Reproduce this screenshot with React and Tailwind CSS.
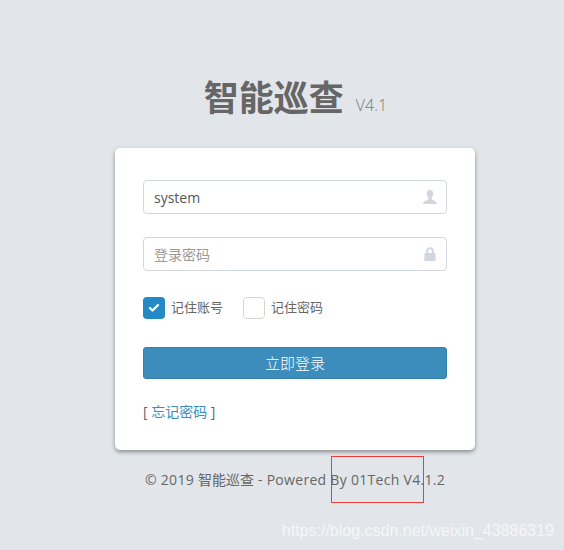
import { Check } from "lucide-react";

const FONT = "font-['Open_Sans','Noto_Sans_CJK_SC',sans-serif]";

function UserGlyph() {
	return (
		<svg viewBox="0 0 16 16" className="w-[16px] h-[16px] text-[#d2d6de]" fill="currentColor">
			<path d="M8 1C5.9 1 4.7 2.5 4.7 4.6c0 1.7.7 3.1 1.6 4v1.2c0 .6-.5 1-1.4 1.4C3.2 11.9 1.2 12.4 1 15h14c-.2-2.6-2.2-3.1-3.9-3.8-.9-.4-1.4-.8-1.4-1.4V8.6c.9-.9 1.6-2.3 1.6-4C11.3 2.5 10.1 1 8 1z" />
		</svg>
	);
}

function LockGlyph() {
	return (
		<svg viewBox="0 0 16 16" className="w-[16px] h-[16px] text-[#d2d6de]" fill="currentColor">
			<path d="M8 1.2c-2.3 0-3.9 1.6-3.9 3.9v2H2.4V15h11.2V7.1h-1.7v-2c0-2.3-1.6-3.9-3.9-3.9zm0 2c1.2 0 1.9.8 1.9 1.9v2H6.1v-2c0-1.1.7-1.9 1.9-1.9z" />
		</svg>
	);
}

export default function App() {
	return (
		<div className={`relative w-[564px] h-[550px] overflow-hidden bg-[#e2e5ea] text-[#666] ${FONT}`}>
			<div className="flex flex-col items-center pt-[73px] pl-[26px]">
				<div className="flex items-baseline justify-center h-[50px] gap-[12px] pl-[1px]">
					<span className="text-[35px] leading-[50px] font-bold text-[#666]">智能巡查</span>
					<span className="text-[16px] font-light text-[#777]">V4.1</span>
				</div>

				<div className="w-[360px] h-[302px] mt-[25px] px-[28px] pt-[32px] bg-white rounded-[5px] shadow-[0_2px_4px_0_rgba(0,0,0,0.4)]">
					<div className="flex items-center justify-between h-[34px] pl-[10px] pr-[8px] border border-[#d2d6de] rounded-[4px]">
						<span className="text-[14px] text-[#555]">system</span>
						<UserGlyph />
					</div>
					<div className="flex items-center justify-between h-[34px] mt-[23px] pl-[10px] pr-[8px] border border-[#d2d6de] rounded-[4px]">
						<span className="text-[14px] text-[#999]">登录密码</span>
						<LockGlyph />
					</div>

					<div className="flex items-center h-[22px] mt-[26px]">
						<div className="flex items-center justify-center w-[22px] h-[22px] bg-[#2489c5] rounded-[4px]">
							<Check className="w-[12px] h-[12px] text-white" strokeWidth={4.5} />
						</div>
						<span className="ml-[6px] text-[13px] text-[#666]">记住账号</span>
						<div className="w-[22px] h-[22px] ml-[20px] bg-white border border-[#d8d5d0] rounded-[4px]" />
						<span className="ml-[6px] text-[13px] text-[#666]">记住密码</span>
					</div>

					<button
						type="button"
						className="block w-full h-[32px] mt-[28px] bg-[#3c8dbc] border border-[#367fa9] rounded-[3px] text-[15px] font-light text-white"
					>
						立即登录
					</button>

					<div className="mt-[23px] text-[14px] leading-[20px] text-[#666]">
						[ <span className="text-[#3c8dbc]">忘记密码</span> ]
					</div>
				</div>

				<div className="mt-[20px] text-[14px] leading-[20px] text-[#666] whitespace-nowrap">
					<span className="tracking-[0.3px]">© 2019 </span>
					智能巡查
					<span className="tracking-[0.3px]"> - Powered By 01Tech V4.1.2</span>
				</div>
			</div>

			<div className="absolute left-[331px] top-[456px] w-[93px] h-[47px] border border-[#f03c3c]" />
			<div className="absolute right-[10px] top-[520px] text-[16px] leading-[22px] text-white/70 font-['Liberation_Sans',sans-serif] whitespace-nowrap">
				https://blog.csdn.net/weixin_43886319
			</div>
		</div>
	);
}
